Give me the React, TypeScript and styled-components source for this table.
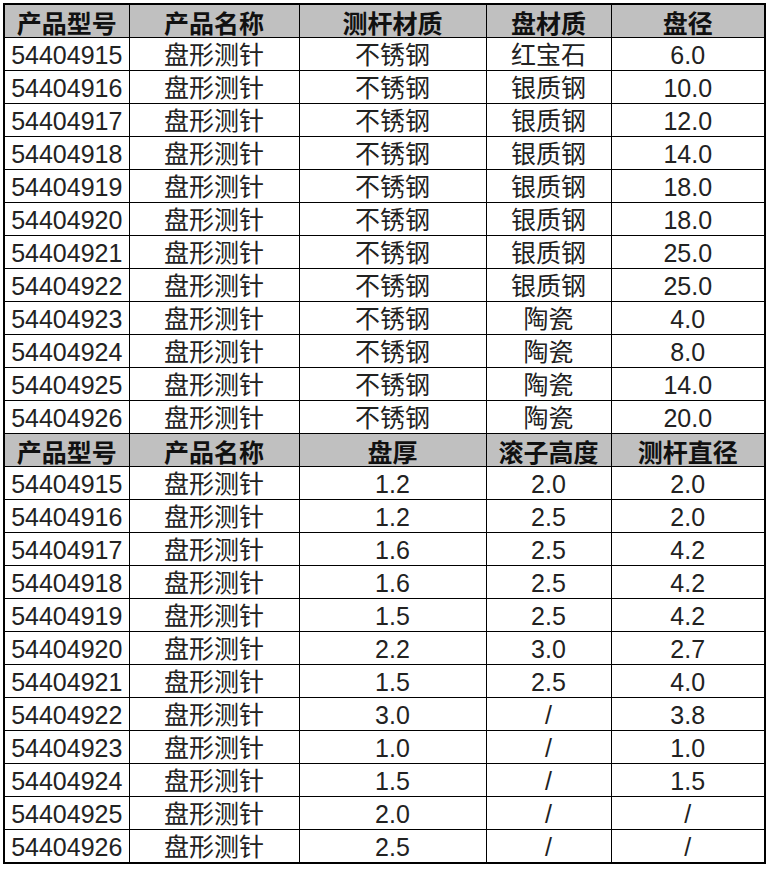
import React from "react";
import styled, { createGlobalStyle } from "styled-components";

const GlobalStyle = createGlobalStyle`
  html, body {
    margin: 0;
    padding: 0;
    background: #ffffff;
  }
  body {
    font-family: "Liberation Sans", "Noto Sans CJK SC", sans-serif;
  }
`;

const Page = styled.div`
  padding: 3px 0 0 3px;
`;

const Table = styled.table`
  border-collapse: collapse;
  table-layout: fixed;
  width: 761px;
  border: 2px solid #000;
`;

const HeadRow = styled.tr`
  background: #c0c0c0;
`;

const Cell = styled.td<{ $head?: boolean }>`
  height: 30px;
  padding: 2px 0 0 0;
  border: 1px solid #000;
  text-align: center;
  vertical-align: middle;
  white-space: nowrap;
  font-family: ${(p) =>
    p.$head
      ? `"Noto Sans CJK SC", sans-serif`
      : `"Liberation Sans", "Noto Sans CJK SC", sans-serif`};
  font-size: 25px;
  line-height: 30px;
  font-weight: ${(p) => (p.$head ? 700 : 400)};
  color: ${(p) => (p.$head ? "#111" : "#222")};
`;

const topHead = ["产品型号", "产品名称", "测杆材质", "盘材质", "盘径"];
const bottomHead = ["产品型号", "产品名称", "盘厚", "滚子高度", "测杆直径"];

const topRows: string[][] = [
  ["54404915", "盘形测针", "不锈钢", "红宝石", "6.0"],
  ["54404916", "盘形测针", "不锈钢", "银质钢", "10.0"],
  ["54404917", "盘形测针", "不锈钢", "银质钢", "12.0"],
  ["54404918", "盘形测针", "不锈钢", "银质钢", "14.0"],
  ["54404919", "盘形测针", "不锈钢", "银质钢", "18.0"],
  ["54404920", "盘形测针", "不锈钢", "银质钢", "18.0"],
  ["54404921", "盘形测针", "不锈钢", "银质钢", "25.0"],
  ["54404922", "盘形测针", "不锈钢", "银质钢", "25.0"],
  ["54404923", "盘形测针", "不锈钢", "陶瓷", "4.0"],
  ["54404924", "盘形测针", "不锈钢", "陶瓷", "8.0"],
  ["54404925", "盘形测针", "不锈钢", "陶瓷", "14.0"],
  ["54404926", "盘形测针", "不锈钢", "陶瓷", "20.0"],
];

const bottomRows: string[][] = [
  ["54404915", "盘形测针", "1.2", "2.0", "2.0"],
  ["54404916", "盘形测针", "1.2", "2.5", "2.0"],
  ["54404917", "盘形测针", "1.6", "2.5", "4.2"],
  ["54404918", "盘形测针", "1.6", "2.5", "4.2"],
  ["54404919", "盘形测针", "1.5", "2.5", "4.2"],
  ["54404920", "盘形测针", "2.2", "3.0", "2.7"],
  ["54404921", "盘形测针", "1.5", "2.5", "4.0"],
  ["54404922", "盘形测针", "3.0", "/", "3.8"],
  ["54404923", "盘形测针", "1.0", "/", "1.0"],
  ["54404924", "盘形测针", "1.5", "/", "1.5"],
  ["54404925", "盘形测针", "2.0", "/", "/"],
  ["54404926", "盘形测针", "2.5", "/", "/"],
];

const widths = [125, 170, 187, 125, 154];

const Section = ({ head, rows }: { head: string[]; rows: string[][] }) => (
  <>
    <HeadRow>
      {head.map((h, i) => (
        <Cell key={i} $head>
          {h}
        </Cell>
      ))}
    </HeadRow>
    {rows.map((r, ri) => (
      <tr key={ri}>
        {r.map((c, ci) => (
          <Cell key={ci}>{c}</Cell>
        ))}
      </tr>
    ))}
  </>
);

export default function App() {
  return (
    <>
      <GlobalStyle />
      <Page>
        <Table>
          <colgroup>
            {widths.map((w, i) => (
              <col key={i} style={{ width: w }} />
            ))}
          </colgroup>
          <tbody>
            <Section head={topHead} rows={topRows} />
            <Section head={bottomHead} rows={bottomRows} />
          </tbody>
        </Table>
      </Page>
    </>
  );
}
